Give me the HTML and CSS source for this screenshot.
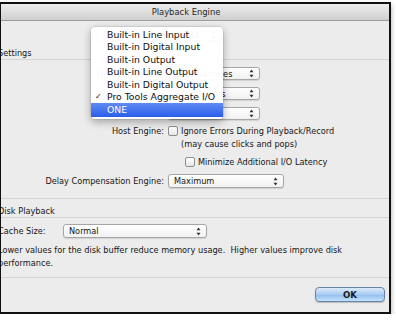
FILE: index.html
```
<!DOCTYPE html>
<html lang="en">

<head>
    <meta charset="UTF-8">
    <meta name="viewport" content="width=device-width, initial-scale=1.0">
    <title>Playback Engine</title>
    <link rel="stylesheet" href="styles.css">
</head>

<body>
    <div class="window">
        <div class="titlebar">Playback Engine</div>
        <div class="panel">
            <div class="engine-row">
                <span class="select w-engine">
                    <span class="select-text">Pro Tools Aggregate I/O</span>
                    <svg class="arrows" width="5" height="9" viewBox="0 0 5 9"><path d="M2.5 0.5 L4.5 3.2 L0.5 3.2 Z M2.5 8.5 L4.5 5.8 L0.5 5.8 Z" fill="#333"/></svg>
                </span>
            </div>

            <div class="section-head">Settings</div>
            <div class="settings">
                <div class="field r-first">
                    <span class="label">H/W Buffer Size:</span>
                    <span class="select w-short">
                        <span class="select-text">1024 Samples</span>
                        <svg class="arrows" width="5" height="9" viewBox="0 0 5 9"><path d="M2.5 0.5 L4.5 3.2 L0.5 3.2 Z M2.5 8.5 L4.5 5.8 L0.5 5.8 Z" fill="#333"/></svg>
                    </span>
                </div>
                <div class="field r-next">
                    <span class="label">Host Processors:</span>
                    <span class="select w-short">
                        <span class="select-text">2 Processors</span>
                        <svg class="arrows" width="5" height="9" viewBox="0 0 5 9"><path d="M2.5 0.5 L4.5 3.2 L0.5 3.2 Z M2.5 8.5 L4.5 5.8 L0.5 5.8 Z" fill="#333"/></svg>
                    </span>
                </div>
                <div class="field r-next">
                    <span class="label">CPU Usage Limit:</span>
                    <span class="select w-short">
                        <span class="select-text">85 %</span>
                        <svg class="arrows" width="5" height="9" viewBox="0 0 5 9"><path d="M2.5 0.5 L4.5 3.2 L0.5 3.2 Z M2.5 8.5 L4.5 5.8 L0.5 5.8 Z" fill="#333"/></svg>
                    </span>
                </div>
                <div class="field r-host">
                    <span class="label">Host Engine:</span>
                    <span class="check-line">
                        <span class="checkbox"></span>
                        <span>Ignore Errors During Playback/Record</span>
                    </span>
                </div>
                <div class="field r-note">
                    <span></span>
                    <span class="hint">(may cause clicks and pops)</span>
                </div>
                <div class="field r-min">
                    <span></span>
                    <span class="check-line indent">
                        <span class="checkbox"></span>
                        <span>Minimize Additional I/O Latency</span>
                    </span>
                </div>
                <div class="field r-delay">
                    <span class="label">Delay Compensation Engine:</span>
                    <span class="select w-delay">
                        <span class="select-text">Maximum</span>
                        <svg class="arrows" width="5" height="9" viewBox="0 0 5 9"><path d="M2.5 0.5 L4.5 3.2 L0.5 3.2 Z M2.5 8.5 L4.5 5.8 L0.5 5.8 Z" fill="#333"/></svg>
                    </span>
                </div>
            </div>

            <div class="section-head">Disk Playback</div>
            <div class="disk">
                <div class="cache-row">
                    <span>Cache Size:</span>
                    <span class="select w-cache">
                        <span class="select-text">Normal</span>
                        <svg class="arrows" width="5" height="9" viewBox="0 0 5 9"><path d="M2.5 0.5 L4.5 3.2 L0.5 3.2 Z M2.5 8.5 L4.5 5.8 L0.5 5.8 Z" fill="#333"/></svg>
                    </span>
                </div>
                <p class="note">Lower values for the disk buffer reduce memory usage.&nbsp; Higher values improve disk<br>performance.</p>
            </div>

            <div class="actions">
                <button class="ok">OK</button>
            </div>
        </div>

        <!-- open popup of the playback engine select -->
        <div class="menu">
            <div class="item"><span class="mark"></span>Built-in Line Input</div>
            <div class="item"><span class="mark"></span>Built-in Digital Input</div>
            <div class="item"><span class="mark"></span>Built-in Output</div>
            <div class="item"><span class="mark"></span>Built-in Line Output</div>
            <div class="item"><span class="mark"></span>Built-in Digital Output</div>
            <div class="item"><span class="mark">✓</span>Pro Tools Aggregate I/O</div>
            <div class="item active"><span class="mark"></span>ONE</div>
        </div>
    </div>
</body>

</html>
```

FILE: styles.css
```
* {
    margin: 0;
    padding: 0;
    box-sizing: border-box;
}

body {
    background: #ffffff;
    font-family: "DejaVu Sans", sans-serif;
    font-size: 8.2px;
    color: #161616;
}

.window {
    position: relative;
    width: 391px;
    height: 312px;
    margin-top: 2px;
    border: 2px solid #111111;
    border-left-width: 1px;
    background: #ececec;
    overflow: hidden;
    display: flex;
    flex-direction: column;
    box-shadow: 0 3px 5px rgba(0, 0, 0, 0.35);
}

.titlebar {
    flex: none;
    height: 17px;
    line-height: 16px;
    padding-right: 18px;
    text-align: center;
    font-size: 8.4px;
    color: #262626;
    background: linear-gradient(#ededed, #cfcfcf);
    border-bottom: 1px solid #9d9d9d;
}

.panel {
    flex: 1;
    margin-left: -3px;
    display: flex;
    flex-direction: column;
}

.engine-row {
    margin-top: 7px;
    height: 13px;
    padding-left: 99px;
    display: flex;
}

.section-head {
    padding-top: 6px;
    line-height: 12px;
    border-bottom: 1px solid #d4d4d4;
}

.settings {
    display: flex;
    flex-direction: column;
    padding-bottom: 10px;
    border-bottom: 1px solid #d4d4d4;
}

.field {
    display: grid;
    grid-template-columns: 166px auto;
    column-gap: 4px;
    align-items: center;
    height: 13px;
}

.field .label {
    text-align: right;
    white-space: nowrap;
}

.r-first {
    margin-top: 7px;
}

.r-next {
    margin-top: 7px;
}

.r-host {
    margin-top: 4px;
}

.r-note {
    margin-top: 1px;
    height: 12px;
}

.r-min {
    margin-top: 5px;
}

.r-delay {
    margin-top: 6px;
    height: 14px;
}

.select {
    height: 13px;
    display: flex;
    align-items: center;
    justify-content: space-between;
    padding: 0 5px 0 5px;
    border: 1px solid #a6a6a6;
    border-radius: 3px;
    background: linear-gradient(#ffffff, #f1f1f1);
    box-shadow: 0 1px 1px rgba(0, 0, 0, 0.12);
    white-space: nowrap;
}

.w-engine {
    width: 125px;
}

.w-short {
    width: 92px;
}

.w-delay {
    width: 116px;
    height: 14px;
}

.w-cache {
    width: 144px;
    height: 14px;
}

.check-line {
    display: flex;
    align-items: center;
    gap: 3px;
    white-space: nowrap;
}

.check-line.indent {
    padding-left: 17px;
}

.checkbox {
    width: 10px;
    height: 10px;
    border: 1px solid #8e8e8e;
    border-radius: 2px;
    background: linear-gradient(#ffffff, #e6e6e6);
}

.hint {
    padding-left: 13px;
    white-space: nowrap;
}

.disk {
    padding-bottom: 7px;
    border-bottom: 1px solid #d4d4d4;
}

.cache-row {
    margin-top: 6px;
    display: grid;
    grid-template-columns: 61px auto;
    column-gap: 4px;
    align-items: center;
}

.note {
    margin-top: 6px;
    line-height: 13px;
    white-space: nowrap;
}

.actions {
    display: flex;
    justify-content: flex-end;
    padding: 9px 4px 0 0;
}

.ok {
    width: 70px;
    height: 15px;
    font-family: "DejaVu Sans", sans-serif;
    font-size: 8.6px;
    font-weight: bold;
    color: #1a1a1a;
    border: 1px solid #6883aa;
    border-radius: 4px;
    background: linear-gradient(#dcebfa 0%, #a9cdf2 50%, #8fbeee 52%, #c5e2fb 100%);
    box-shadow: 0 1px 1px rgba(0, 0, 0, 0.2);
}

.menu {
    position: absolute;
    left: 90px;
    top: 23px;
    width: 132px;
    padding: 2px 0 2px 0;
    font-size: 9.3px;
    color: #111111;
    background: rgba(255, 255, 255, 0.96);
    border-radius: 4px;
    box-shadow: 0 3px 9px rgba(0, 0, 0, 0.32), 0 0 0 1px rgba(0, 0, 0, 0.07);
}

.item {
    display: flex;
    height: 12.4px;
    line-height: 12.4px;
    white-space: nowrap;
}

.item .mark {
    width: 16px;
    padding-left: 4px;
    font-size: 8px;
}

.item.active {
    height: 14px;
    line-height: 14px;
    color: #ffffff;
    background: linear-gradient(#608bf4, #2a5ee9);
}
```
